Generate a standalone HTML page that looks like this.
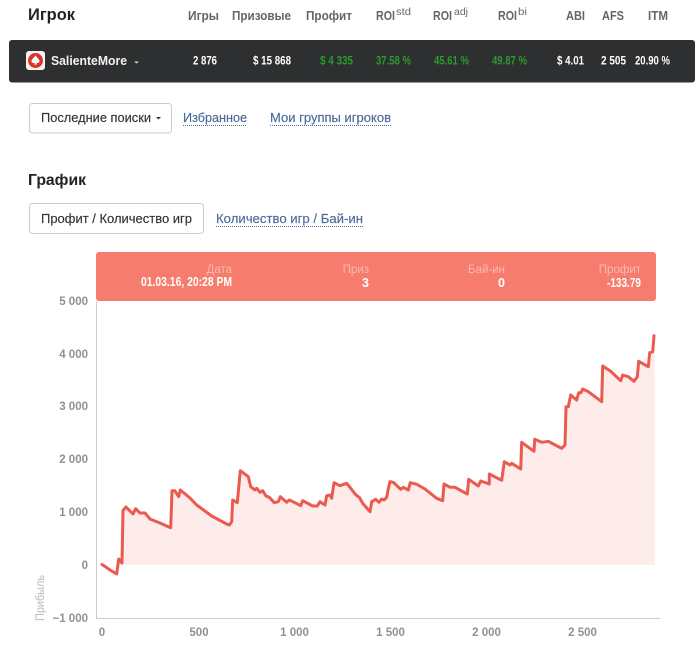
<!DOCTYPE html>
<html><head><meta charset="utf-8">
<style>
html,body{margin:0;padding:0;background:#fff;width:700px;height:650px;overflow:hidden}
svg{display:block;font-family:"Liberation Sans",sans-serif;filter:blur(.35px)}
.h{font-size:12.500px;font-weight:bold;fill:#666}
.sup{font-size:10.500px;fill:#666}
.v{font-size:12px;fill:#fff;font-weight:bold}
.g{font-size:12px;fill:#2c9a2c;font-weight:bold}
.t{font-size:12.500px;fill:#333;stroke:#333;stroke-width:.15px}
.l{font-size:12.500px;fill:#4a6a9a;stroke:#4a6a9a;stroke-width:.15px}
.k{font-size:11.500px;font-weight:bold;fill:#909090}
.pl{font-size:11.500px;fill:#fbb9b0}
.pv{font-size:12.500px;font-weight:bold;fill:#fff}
</style></head><body>
<svg width="700" height="650" viewBox="0 0 700 650" xmlns="http://www.w3.org/2000/svg">
<text x="28" y="20" font-size="16.500" font-weight="bold" fill="#222" textLength="47" lengthAdjust="spacingAndGlyphs">Игрок</text>
<text class="h" x="188" y="20" textLength="31" lengthAdjust="spacingAndGlyphs">Игры</text>
<text class="h" x="232" y="20" textLength="59" lengthAdjust="spacingAndGlyphs">Призовые</text>
<text class="h" x="306" y="20" textLength="46" lengthAdjust="spacingAndGlyphs">Профит</text>
<text class="h" x="376" y="20" textLength="19" lengthAdjust="spacingAndGlyphs">ROI</text><text class="sup" x="396" y="15" textLength="15" lengthAdjust="spacingAndGlyphs">std</text>
<text class="h" x="433" y="20" textLength="19" lengthAdjust="spacingAndGlyphs">ROI</text><text class="sup" x="454" y="15" textLength="14" lengthAdjust="spacingAndGlyphs">adj</text>
<text class="h" x="498" y="20" textLength="19" lengthAdjust="spacingAndGlyphs">ROI</text><text class="sup" x="518" y="15" textLength="9" lengthAdjust="spacingAndGlyphs">bi</text>
<text class="h" x="566" y="20" textLength="19" lengthAdjust="spacingAndGlyphs">ABI</text>
<text class="h" x="602" y="20" textLength="22" lengthAdjust="spacingAndGlyphs">AFS</text>
<text class="h" x="648" y="20" textLength="20" lengthAdjust="spacingAndGlyphs">ITM</text>

<rect x="9" y="40" width="686" height="42.500" rx="3" fill="#2d2f30"/>
<rect x="26" y="51" width="19" height="19" rx="3" fill="#fbf3f1"/>
<circle cx="35.500" cy="60.500" r="7.500" fill="#d9362b"/>
<path d="M35.500 55.500C37 58 39.500 59 39.500 61.300C39.500 63 37.300 63.500 36.200 62.500L36.800 64.500H34.200L34.800 62.500C33.700 63.500 31.500 63 31.500 61.300C31.500 59 34 58 35.500 55.500Z" fill="#fff"/>
<text x="51" y="65" font-size="12.500" font-weight="bold" fill="#f2f2f2" textLength="76" lengthAdjust="spacingAndGlyphs">SalienteMore</text>
<path d="M134 61.500h5l-2.500 2z" fill="#ddd"/>
<text class="v" x="193" y="64.500" textLength="24" lengthAdjust="spacingAndGlyphs">2 876</text>
<text class="v" x="253" y="64.500" textLength="38" lengthAdjust="spacingAndGlyphs">$ 15 868</text>
<text class="g" x="320" y="64.500" textLength="33" lengthAdjust="spacingAndGlyphs">$ 4 335</text>
<text class="g" x="376" y="64.500" textLength="35" lengthAdjust="spacingAndGlyphs">37.58 %</text>
<text class="g" x="434" y="64.500" textLength="35" lengthAdjust="spacingAndGlyphs">45.61 %</text>
<text class="g" x="492" y="64.500" textLength="35" lengthAdjust="spacingAndGlyphs">49.87 %</text>
<text class="v" x="557" y="64.500" textLength="27" lengthAdjust="spacingAndGlyphs">$ 4.01</text>
<text class="v" x="601" y="64.500" textLength="25" lengthAdjust="spacingAndGlyphs">2 505</text>
<text class="v" x="635" y="64.500" textLength="35" lengthAdjust="spacingAndGlyphs">20.90 %</text>

<rect x="29.500" y="103.500" width="142" height="29.500" rx="3" fill="#fff" stroke="#ccc"/>
<text class="t" x="41" y="122" textLength="110" lengthAdjust="spacingAndGlyphs">Последние поиски</text>
<path d="M156 117h5l-2.500 2.500z" fill="#333"/>
<text class="l" x="183" y="122" textLength="64" lengthAdjust="spacingAndGlyphs">Избранное</text>
<line x1="183" y1="125.500" x2="247" y2="125.500" stroke="#4a6a9a" stroke-dasharray="1 1"/>
<text class="l" x="270" y="122" textLength="121" lengthAdjust="spacingAndGlyphs">Мои группы игроков</text>
<line x1="270" y1="125.500" x2="391" y2="125.500" stroke="#4a6a9a" stroke-dasharray="1 1"/>

<text x="28" y="185" font-size="15.500" font-weight="bold" fill="#222" textLength="58" lengthAdjust="spacingAndGlyphs">График</text>
<rect x="29.500" y="203.500" width="174" height="30" rx="3" fill="#fff" stroke="#ccc"/>
<text class="t" x="41" y="223" textLength="151" lengthAdjust="spacingAndGlyphs">Профит / Количество игр</text>
<text class="l" x="216" y="223" textLength="147" lengthAdjust="spacingAndGlyphs">Количество игр / Бай-ин</text>
<line x1="216" y1="226.500" x2="363" y2="226.500" stroke="#4a6a9a" stroke-dasharray="1 1"/>

<rect x="96" y="252" width="560" height="49" rx="3" fill="#f67c6e"/>
<text class="pl" x="232" y="273" text-anchor="end">Дата</text>
<text class="pv" x="232" y="286" text-anchor="end" textLength="91" lengthAdjust="spacingAndGlyphs">01.03.16, 20:28 PM</text>
<text class="pl" x="369" y="273" text-anchor="end">Приз</text>
<text class="pv" x="369" y="287" text-anchor="end">3</text>
<text class="pl" x="505" y="273" text-anchor="end">Бай-ин</text>
<text class="pv" x="505" y="287" text-anchor="end">0</text>
<text class="pl" x="641" y="273" text-anchor="end">Профит</text>
<text class="pv" x="641" y="287" text-anchor="end" textLength="34" lengthAdjust="spacingAndGlyphs">-133.79</text>

<path d="M96.500 301V618.500H660" fill="none" stroke="#ccc"/>
<text class="k" x="88" y="305" text-anchor="end">5 000</text>
<text class="k" x="88" y="358" text-anchor="end">4 000</text>
<text class="k" x="88" y="410" text-anchor="end">3 000</text>
<text class="k" x="88" y="463" text-anchor="end">2 000</text>
<text class="k" x="88" y="516" text-anchor="end">1 000</text>
<text class="k" x="88" y="569" text-anchor="end">0</text>
<text class="k" x="88" y="622" text-anchor="end">−1 000</text>
<text class="k" x="102" y="636" text-anchor="middle">0</text>
<text class="k" x="199" y="636" text-anchor="middle">500</text>
<text class="k" x="294.500" y="636" text-anchor="middle">1 000</text>
<text class="k" x="390.500" y="636" text-anchor="middle">1 500</text>
<text class="k" x="486.500" y="636" text-anchor="middle">2 000</text>
<text class="k" x="582.500" y="636" text-anchor="middle">2 500</text>
<text x="0" y="0" font-size="11.500" fill="#bbb" transform="translate(44 621) rotate(-90)" textLength="46" lengthAdjust="spacingAndGlyphs">Прибыль</text>

<path fill="#fdecea" d="M118.700 565L118.700 559L122 563L123 510.500L126 507L133 514L135.700 508.700L140 513L145 513L150 519L160 523L170.700 527.700L172 490.700L174.700 490.700L178.700 496.700L180.300 490L190 498L196.700 505L211.700 516L226.700 524L229.300 525L231.700 521.700L232.700 500L237.300 502.700L240.300 470.700L248.300 476.700L250.700 486.700L255 490L256.700 488.300L260 492.300L262.700 490.700L266 496L269.300 497.300L274.300 502.700L278.300 501.700L280.300 496.700L286.700 502.300L289.300 500L295 502.700L300.700 505.700L302.700 500.700L312.700 506L317.300 506L320 501.700L325 505L326.700 495.700L330 495L331.700 498.300L334 482.700L340 485.700L346.700 483.300L350.700 488.300L356 495L359.300 497.300L362.700 503.300L370 511.700L371.700 501.700L375.700 499.300L379 502.300L381.700 499L384 500L386.700 497.300L388 490L390 481.700L393.300 482.300L400.700 489.300L403.300 487.300L408.300 490L410.300 482.700L416.700 484.300L425 489L436.700 498.300L442.700 500.700L444 484L450 487.300L455 487.300L467.300 494L468.700 479.300L478.300 486L480.700 481L489.300 484L489.300 474L501.700 480.300L504.300 461.700L510 465L511.700 463.300L520.700 469L521.700 442.300L534 451.300L534.700 439.300L541.700 442.300L548.300 441.300L553.300 444L561.700 448.300L565 445L566 406.700L568.300 406.700L570.700 395L576.700 400L578.700 392.700L581 392.700L582.700 389L588.300 391.700L601.700 401.700L602.700 366L610 370.700L620.700 380.700L622.700 375L628.300 376.700L634 381.300L637.300 376.700L638.700 361.300L648.300 366.700L649.700 352.700L652.700 351.700L654 335.700L654.700 335.700V565Z"/>
<path fill="none" stroke="#ea5a4e" stroke-width="3" stroke-linejoin="round" stroke-linecap="round" d="M102 564.500L105 566.500L110 570L116.700 574L118.700 559L122 563L123 510.500L126 507L133 514L135.700 508.700L140 513L145 513L150 519L160 523L170.700 527.700L172 490.700L174.700 490.700L178.700 496.700L180.300 490L190 498L196.700 505L211.700 516L226.700 524L229.300 525L231.700 521.700L232.700 500L237.300 502.700L240.300 470.700L248.300 476.700L250.700 486.700L255 490L256.700 488.300L260 492.300L262.700 490.700L266 496L269.300 497.300L274.300 502.700L278.300 501.700L280.300 496.700L286.700 502.300L289.300 500L295 502.700L300.700 505.700L302.700 500.700L312.700 506L317.300 506L320 501.700L325 505L326.700 495.700L330 495L331.700 498.300L334 482.700L340 485.700L346.700 483.300L350.700 488.300L356 495L359.300 497.300L362.700 503.300L370 511.700L371.700 501.700L375.700 499.300L379 502.300L381.700 499L384 500L386.700 497.300L388 490L390 481.700L393.300 482.300L400.700 489.300L403.300 487.300L408.300 490L410.300 482.700L416.700 484.300L425 489L436.700 498.300L442.700 500.700L444 484L450 487.300L455 487.300L467.300 494L468.700 479.300L478.300 486L480.700 481L489.300 484L489.300 474L501.700 480.300L504.300 461.700L510 465L511.700 463.300L520.700 469L521.700 442.300L534 451.300L534.700 439.300L541.700 442.300L548.300 441.300L553.300 444L561.700 448.300L565 445L566 406.700L568.300 406.700L570.700 395L576.700 400L578.700 392.700L581 392.700L582.700 389L588.300 391.700L601.700 401.700L602.700 366L610 370.700L620.700 380.700L622.700 375L628.300 376.700L634 381.300L637.300 376.700L638.700 361.300L648.300 366.700L649.700 352.700L652.700 351.700L654 335.700"/>
</svg>
</body></html>
